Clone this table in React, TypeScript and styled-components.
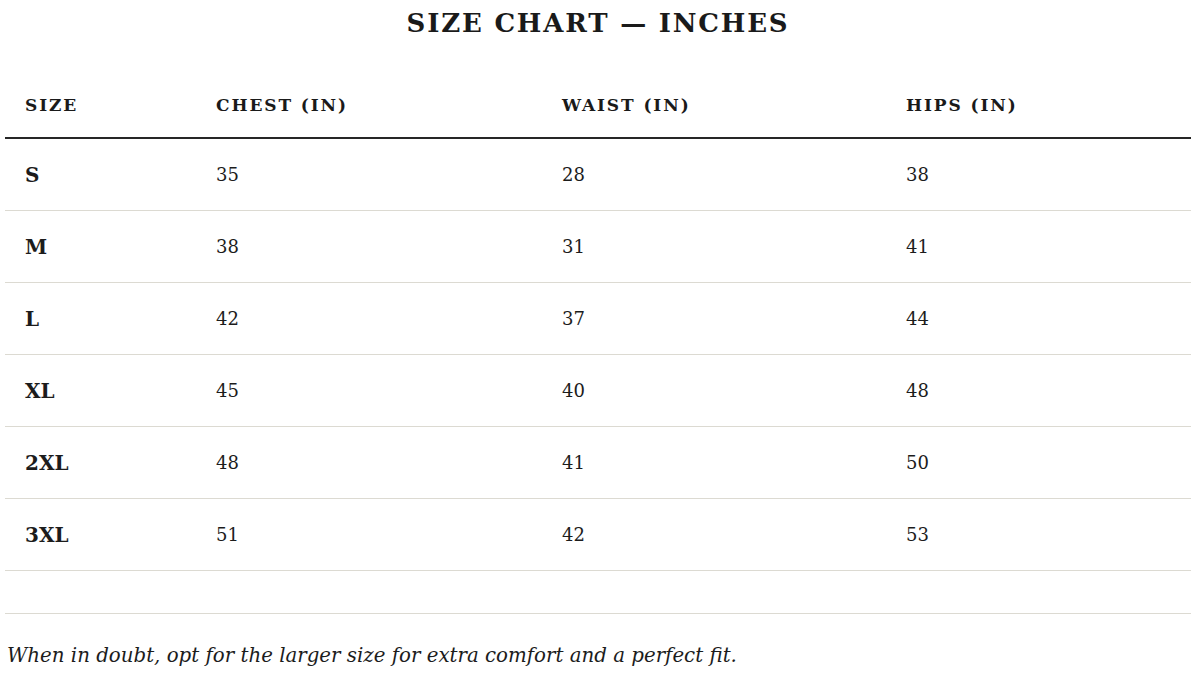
import React from "react";
import styled, { createGlobalStyle } from "styled-components";

const Global = createGlobalStyle`
  html, body { margin: 0; padding: 0; background: #ffffff; }
  body { font-family: "DejaVu Serif", "Liberation Serif", serif; color: #1c1c1c; }
`;

const Page = styled.div`
  width: 1186px;
  margin: 0 9px 0 5px;
  display: flex;
  flex-direction: column;
`;

const Title = styled.h1`
  margin: 8px 0 0;
  text-align: center;
  font-size: 26px;
  line-height: 31px;
  font-weight: 700;
  letter-spacing: 1.8px;
  color: #1a1a1a;
`;

const Grid = styled.div`
  display: grid;
  grid-template-columns: 191px 346px 344px 1fr;
`;

const HeadRow = styled(Grid)`
  margin-top: 34px;
  height: 64px;
  align-items: center;
  border-bottom: 2px solid #262626;
`;

const HeadCell = styled.div`
  padding-left: 20px;
  font-size: 17px;
  font-weight: 700;
  letter-spacing: 1.9px;
  color: #1a1a1a;
`;

const Row = styled(Grid)`
  box-sizing: border-box;
  height: 72px;
  align-items: center;
  border-bottom: 1px solid #dcdad2;
`;

const Cell = styled.div<{ $bold?: boolean }>`
  padding-left: 20px;
  font-size: ${(p) => (p.$bold ? 20 : 18)}px;
  font-weight: ${(p) => (p.$bold ? 700 : 400)};
  color: #1c1c1c;
`;

const Spacer = styled.div`
  height: 42px;
  border-bottom: 1px solid #dcdad2;
`;

const Note = styled.p`
  margin: 28px 0 0 2px;
  font-size: 19.8px;
  line-height: 28px;
  font-style: italic;
  color: #1c1c1c;
`;

const rows: [string, number, number, number][] = [
  ["S", 35, 28, 38],
  ["M", 38, 31, 41],
  ["L", 42, 37, 44],
  ["XL", 45, 40, 48],
  ["2XL", 48, 41, 50],
  ["3XL", 51, 42, 53],
];

export default function App() {
  return (
    <Page>
      <Global />
      <Title>SIZE CHART — INCHES</Title>
      <HeadRow>
        <HeadCell>SIZE</HeadCell>
        <HeadCell>CHEST (IN)</HeadCell>
        <HeadCell>WAIST (IN)</HeadCell>
        <HeadCell>HIPS (IN)</HeadCell>
      </HeadRow>
      {rows.map(([s, c, w, h]) => (
        <Row key={s}>
          <Cell $bold>{s}</Cell>
          <Cell>{c}</Cell>
          <Cell>{w}</Cell>
          <Cell>{h}</Cell>
        </Row>
      ))}
      <Spacer />
      <Note>When in doubt, opt for the larger size for extra comfort and a perfect fit.</Note>
    </Page>
  );
}
